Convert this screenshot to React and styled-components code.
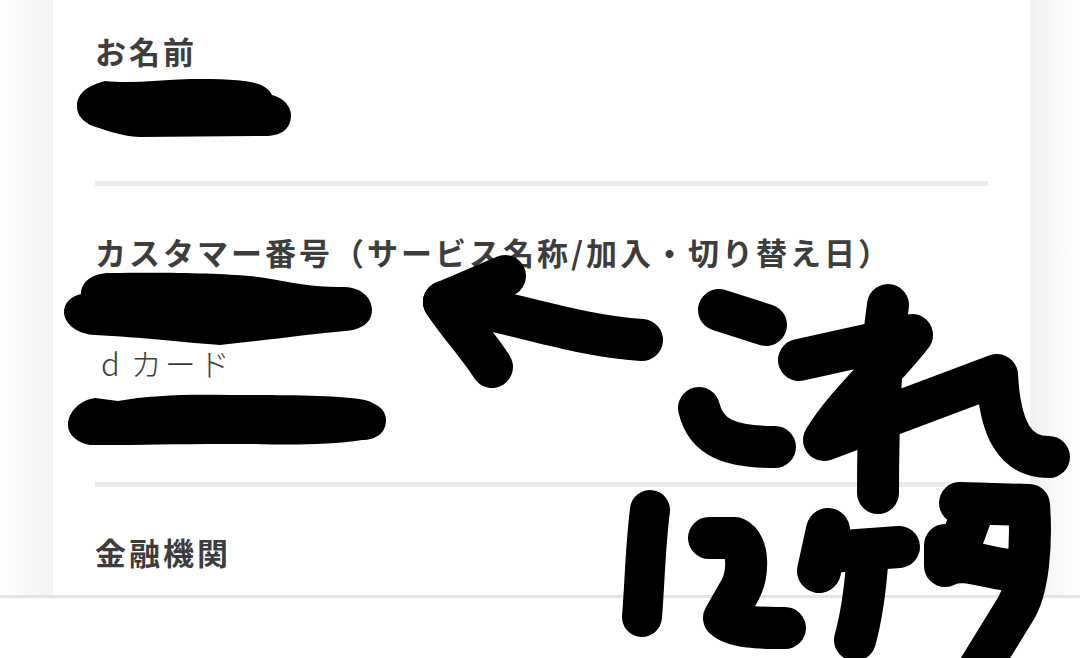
import React from 'react'
import styled, { createGlobalStyle } from 'styled-components'

const GlobalStyle = createGlobalStyle`
    html, body {
        margin: 0;
        padding: 0;
        background: #ffffff;
    }
`
const Screen = styled.div`
    position: relative;
    width: 1080px;
    height: 658px;
    overflow: hidden;
    display: flex;
    flex-direction: column;
    font-family: "Noto Sans CJK JP", "Noto Sans", sans-serif;
    color: #3d3d3d;
`
const Content = styled.main`
    flex: 1;
    min-height: 0;
    overflow: hidden;
    padding: 0 50px 0 53px;
    background: linear-gradient(90deg, #ffffff 0, #f3f3f3 53px, #f1f1f1 1030px, #ffffff 100%);
`
const Card = styled.div`
    background: #ffffff;
    height: 100%;
    padding: 0 42px;
    overflow: hidden;
`
const Section = styled.section`
    padding-top: ${(p) => p.$top}px;
    padding-bottom: ${(p) => p.$bottom}px;
    border-bottom: ${(p) => (p.$last ? 'none' : '5px solid #ebebeb')};
`
const Label = styled.h3`
    margin: 0;
    font-size: 31px;
    line-height: 42px;
    font-weight: 700;
    letter-spacing: 3px;
    white-space: nowrap;
`
const Redacted = styled.div`
    height: ${(p) => p.$height}px;
`
const SubLabel = styled.div`
    font-size: 31px;
    line-height: 42px;
    font-weight: 300;
    letter-spacing: 3px;
    padding-left: 6px;
`
const CardInitial = styled.span`
    margin-right: 8px;
`
const BottomBar = styled.footer`
    height: 60px;
    flex-shrink: 0;
    background: #ffffff;
    border-top: 3px solid #e3e3e3;
`
const Scribble = styled.svg`
    position: absolute;
    left: 0;
    top: 0;
    width: 1080px;
    height: 658px;
    pointer-events: none;
`
const Pen = styled.path`
    fill: none;
    stroke: #000000;
    stroke-width: ${(p) => p.$w || 42}px;
    stroke-linecap: round;
    stroke-linejoin: round;
`
const Blot = styled.path`
    fill: #000000;
`

// black marker drawn on top of the screenshot
function Markup() {
    return (
        <Scribble viewBox="0 0 1080 658">
            <Blot d="M77 106C77 92 90 85 105 81C130 84 160 80 190 79C240 79 265 80 272 95C285 98 291 108 291 115C291 130 280 136 265 136L140 137C120 136 105 130 90 125C82 120 77 115 77 106Z" />
            <Blot d="M81 294C81 282 92 273 110 273C160 272 220 273 250 276C285 280 300 287 345 287C362 288 372 298 372 310C372 322 362 330 345 331C310 334 260 341 220 345C190 343 140 337 95 335C75 334 64 322 64 312C64 302 72 296 81 294Z" />
            <Blot d="M68 425C68 412 80 400 95 398L118 401C150 395 190 394 230 395C280 395 340 395 365 400C378 404 386 410 386 420C386 433 376 440 362 440C330 445 290 445 255 444C210 444 170 444 130 445C115 445 100 445 90 445C78 443 68 435 68 425Z" />
            <Pen d="M444 302L505 276" />
            <Pen d="M444 302C455 320 478 345 492 367" />
            <Pen d="M444 302C510 310 570 335 642 340" />
            <Pen d="M719 310L766 325" />
            <Pen d="M699 408C706 438 730 447 775 447" />
            <Pen d="M888 305C880 360 878 430 878 493" />
            <Pen d="M799 360L912 335C885 370 845 405 824 440L997 375C1000 430 1015 457 1049 457" />
            <Pen $w={40} d="M650 510C645 550 645 580 642 617" />
            <Pen d="M709 538L735 538C750 545 748 575 740 590L724 618C735 628 760 628 785 628" />
            <Pen $w={44} d="M828 530L819 571" />
            <Pen d="M830 552L899 547" />
            <Pen d="M867 565C865 590 862 615 855 640" />
            <Pen d="M960 503L1029 505C1032 545 1028 590 1015 610L975 675" />
            <Pen d="M975 505L962 540" />
            <Pen d="M945 545L945 566C965 555 990 571 1022 571" />
        </Scribble>
    )
}

export default function App() {
    return (
        <Screen>
            <GlobalStyle />
            <Content>
                <Card>
                    <Section $top={30} $bottom={47}>
                        <Label>お名前</Label>
                        <Redacted $height={62} />
                    </Section>
                    <Section $top={45} $bottom={45}>
                        <Label>カスタマー番号（サービス名称/加入・切り替え日）</Label>
                        <Redacted $height={69} />
                        <SubLabel><CardInitial>d</CardInitial>カード</SubLabel>
                        <Redacted $height={53} />
                    </Section>
                    <Section $top={44} $last>
                        <Label>金融機関</Label>
                    </Section>
                </Card>
            </Content>
            <BottomBar />
            <Markup />
        </Screen>
    )
}
